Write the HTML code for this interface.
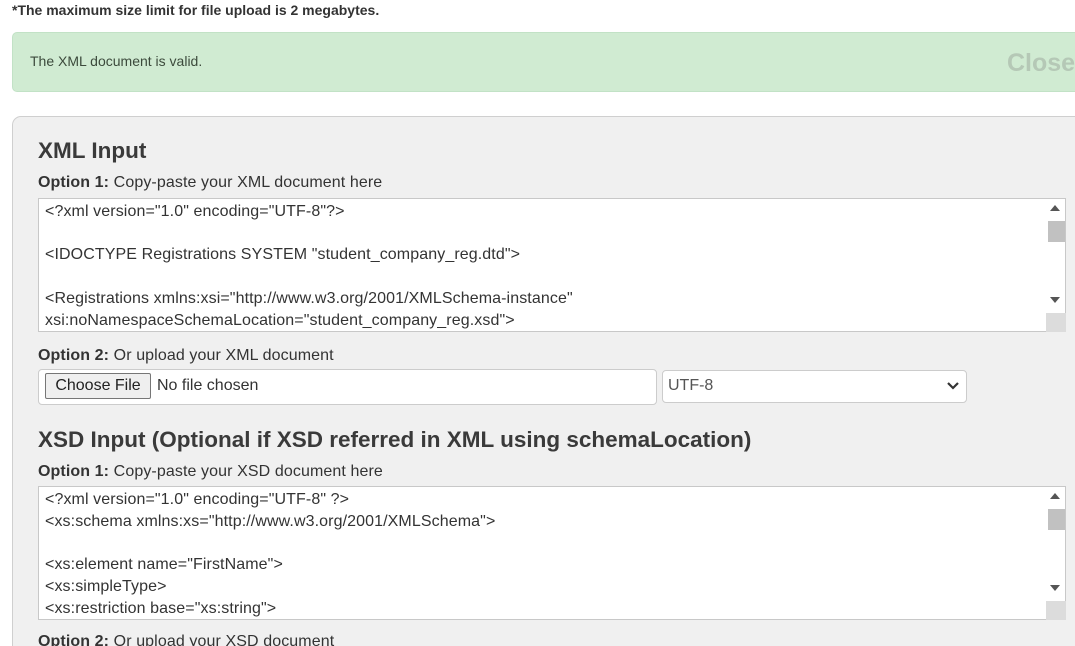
<!DOCTYPE html>
<html style="overflow:hidden;height:646px"><head><style>
body{margin:0;width:1075px;height:646px;overflow:hidden;background:#fff;font-family:"Liberation Sans",Arial,sans-serif;color:#333;position:relative}
.a{position:absolute;white-space:nowrap}
.ta{position:absolute;left:38px;width:1028px;height:134px;background:#fff;border:1px solid #c8c8c8;box-sizing:border-box}
.ta .t{position:absolute;left:6px;top:2px;font-size:16px;line-height:21.7px;color:#333;white-space:pre;letter-spacing:0.1px}
.sb{position:absolute;right:0;top:0;width:19px;height:100%;background:#fff}
.lab{font-size:16px;letter-spacing:0.1px}
.lab b{font-weight:bold}
h2{margin:0;font-size:22.5px;font-weight:bold;color:#3a3a3a}
</style></head><body>
<div class="a" style="left:12px;top:2px;font-size:14px;font-weight:bold">*The maximum size limit for file upload is 2 megabytes.</div>
<div class="a" style="left:12px;top:32px;width:1080px;height:60px;background:#d0ebd2;border:1px solid #c2e2c6;border-radius:5px;box-sizing:border-box"></div>
<div class="a" style="left:30px;top:53px;font-size:14px;color:#3c4a3c">The XML document is valid.</div>
<div class="a" style="left:1007px;top:49px;font-size:25px;font-weight:bold;color:#b5c8b6">Close</div>

<div class="a" style="left:12px;top:116px;width:1090px;height:540px;background:#f0f0f0;border:1px solid #cfcfcf;border-radius:9px;box-sizing:border-box"></div>
<h2 class="a" style="left:38px;top:138px">XML Input</h2>
<div class="a lab" style="left:38px;top:174px"><b>Option 1:</b> Copy-paste your XML document here</div>
<div class="ta" style="top:198px">
<div class="t">&lt;?xml version="1.0" encoding="UTF-8"?&gt;

&lt;IDOCTYPE Registrations SYSTEM "student_company_reg.dtd"&gt;

&lt;Registrations xmlns:xsi="http://www.w3.org/2001/XMLSchema-instance"
xsi:noNamespaceSchemaLocation="student_company_reg.xsd"&gt;</div>
<div class="sb"><div style="position:absolute;left:4px;top:6px;border:5px solid transparent;border-bottom:6px solid #555;border-top:0"></div><div style="position:absolute;left:2px;top:22px;width:17px;height:21px;background:#c1c1c1"></div><div style="position:absolute;left:4px;top:98px;border:5px solid transparent;border-top:6px solid #555;border-bottom:0"></div><div style="position:absolute;left:0;top:114px;width:20px;height:19px;background:#dcdcdc"></div></div>
</div>
<div class="a lab" style="left:38px;top:347px"><b>Option 2:</b> Or upload your XML document</div>
<div class="a" style="left:38px;top:369px;width:619px;height:36px;background:#fff;border:1px solid #ccc;border-radius:4px;box-sizing:border-box"></div>
<div class="a" style="left:45px;top:373px;width:106px;height:26px;background:#efefef;border:1px solid #767676;border-radius:2px;box-sizing:border-box;font-size:16px;text-align:center;line-height:24px;color:#222">Choose File</div>
<div class="a" style="left:157px;top:377px;font-size:16px;color:#333">No file chosen</div>
<div class="a" style="left:662px;top:370px;width:305px;height:33px;background:#fff;border:1px solid #ccc;border-radius:4px;box-sizing:border-box"></div>
<div class="a" style="left:668px;top:377px;font-size:16px;color:#555">UTF-8</div>
<svg class="a" style="left:946px;top:381px" width="14" height="10"><path d="M2 2 L7 7 L12 2" stroke="#333" stroke-width="2.2" fill="none"/></svg>

<h2 class="a" style="left:38px;top:427px">XSD Input (Optional if XSD referred in XML using schemaLocation)</h2>
<div class="a lab" style="left:38px;top:463px"><b>Option 1:</b> Copy-paste your XSD document here</div>
<div class="ta" style="top:486px">
<div class="t">&lt;?xml version="1.0" encoding="UTF-8" ?&gt;
&lt;xs:schema xmlns:xs="http://www.w3.org/2001/XMLSchema"&gt;

&lt;xs:element name="FirstName"&gt;
&lt;xs:simpleType&gt;
&lt;xs:restriction base="xs:string"&gt;</div>
<div class="sb"><div style="position:absolute;left:4px;top:6px;border:5px solid transparent;border-bottom:6px solid #555;border-top:0"></div><div style="position:absolute;left:2px;top:22px;width:17px;height:21px;background:#c1c1c1"></div><div style="position:absolute;left:4px;top:98px;border:5px solid transparent;border-top:6px solid #555;border-bottom:0"></div><div style="position:absolute;left:0;top:114px;width:20px;height:19px;background:#dcdcdc"></div></div>
</div>
<div class="a lab" style="left:38px;top:633px"><b>Option 2:</b> Or upload your XSD document</div>
</body></html>
